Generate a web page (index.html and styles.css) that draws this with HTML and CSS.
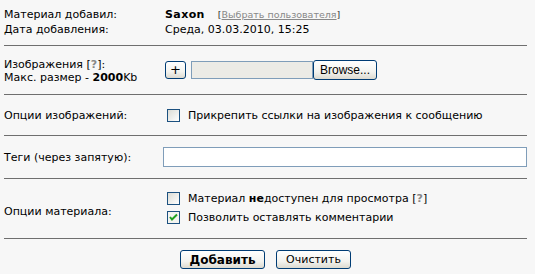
FILE: index.html
```html
<!DOCTYPE html>
<html>
    <head>
        <meta charset="utf-8">
        <title>Добавить материал</title>
        <link rel="stylesheet" href="styles.css">
    </head>
    <body>
        <div id="form">
            <div class="sec info">
                <div class="row">
                    <div class="lbl">Материал добавил:</div>
                    <div class="val"><b class="user">Saxon</b><span class="pick">[<a href="#">Выбрать пользователя</a>]</span></div>
                </div>
                <div class="row">
                    <div class="lbl">Дата добавления:</div>
                    <div class="val">Среда, 03.03.2010, 15:25</div>
                </div>
            </div>
            <div class="sec images">
                <div class="lbl tight">Изображения [<span class="q">?</span>]:<br>Макс. размер - <b>2000</b>Kb</div>
                <div class="val">
                    <button class="btn plus">+</button>
                    <span class="file"></span><button class="btn browse">Browse...</button>
                </div>
            </div>
            <div class="sec imgopts">
                <div class="lbl">Опции изображений:</div>
                <div class="val"><span class="cb"></span><span>Прикрепить ссылки на изображения к сообщению</span></div>
            </div>
            <div class="sec tags">
                <div class="lbl">Теги (через запятую):</div>
                <div class="val wide"><span class="text"></span></div>
            </div>
            <div class="sec matopts">
                <div class="lbl">Опции материала:</div>
                <div class="val list">
                    <div class="opt"><span class="cb"></span><span>Материал <b>не</b>доступен для просмотра [<span class="q">?</span>]</span></div>
                    <div class="opt"><span class="cb on"></span><span>Позволить оставлять комментарии</span></div>
                </div>
            </div>
            <div class="actions">
                <button class="btn submit">Добавить</button>
                <button class="btn">Очистить</button>
            </div>
        </div>
    </body>
</html>
```

FILE: styles.css
```css
html, body {
    height: 100%;
}
body {
    background-color: #f7f7f7;
    margin: 0;
    font-family: "DejaVu Sans", Verdana, sans-serif;
    font-size: 11px;
    color: #000;
    overflow: hidden;
}

#form {
    width: 523px;
    margin-left: 4px;
}

.sec {
    display: flex;
    align-items: center;
    border-bottom: 1px solid #6f6f6f;
}

.info {
    display: block;
    padding: 7px 0 8px;
}

.row {
    display: flex;
    line-height: 15px;
}

.lbl {
    width: 161px;
    flex: none;
}

.tight {
    line-height: 13px;
    padding-top: 1px;
}

.val {
    display: flex;
    align-items: center;
}

.wide {
    flex: 1;
}

.user {
    letter-spacing: 0.4px;
}

.pick {
    font-size: 9.5px;
    color: #333;
    margin-left: 13px;
}

.pick a {
    color: #888;
}

.q {
    color: #888;
    font-weight: bold;
}

.images {
    height: 48px;
}

.imgopts {
    height: 40px;
}

.tags {
    height: 42px;
}

.matopts {
    height: 59px;
}

.matopts .lbl {
    padding-top: 5px;
}

.list {
    display: block;
    padding-bottom: 1px;
}

.opt {
    display: flex;
    align-items: center;
    height: 19px;
}

.cb {
    width: 11px;
    height: 11px;
    border: 1px solid #1c5180;
    background: linear-gradient(135deg, #dcdcd5, #fff);
    margin: 0 8px 0 2px;
    flex: none;
}

.cb.on {
    background: #f4f4f0 url("data:image/svg+xml,%3Csvg xmlns='http://www.w3.org/2000/svg' width='11' height='11'%3E%3Cpath d='M2 5l2 2.5 5-5' fill='none' stroke='%2321a121' stroke-width='2'/%3E%3C/svg%3E") no-repeat center;
}

.btn {
    font-family: "DejaVu Sans", Verdana, sans-serif;
    font-size: 11px;
    color: #000;
    height: 18px;
    padding: 0 8px;
    border: 1px solid #003c74;
    border-radius: 3px;
    background: linear-gradient(#fff, #f3f3ef 60%, #dcdad0);
}

.plus {
    width: 21px;
    padding: 0;
    font-size: 13px;
    line-height: 14px;
}

.file {
    width: 120px;
    height: 16px;
    margin-left: 5px;
    border: 1px solid #7f9db9;
    background: #ecebe6;
}

.browse {
    width: 64px;
    padding: 0;
    height: 20px;
    font-family: "Liberation Sans", Arial, sans-serif;
    font-size: 12px;
}

.text {
    display: block;
    width: 100%;
    height: 18px;
    border: 1px solid #7f9db9;
    background: #fff;
    margin-left: -2px;
    margin-right: -1px;
}

.actions {
    display: flex;
    justify-content: center;
    gap: 11px;
    padding-top: 11px;
}

.submit {
    font-weight: bold;
    font-size: 12px;
    width: 85px;
}

.actions .btn {
    height: 19px;
    min-width: 75px;
}
```
